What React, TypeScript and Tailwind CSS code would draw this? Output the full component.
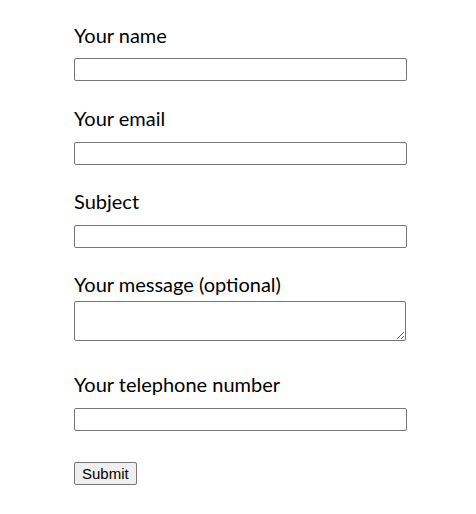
import React from 'react';

const inputCls = 'block h-[23px] w-[333px] rounded-[2px] border border-[#767676] bg-white';
const labelCls = 'text-[20px] leading-[28px]';

export default function App() {
  return (
    <div className="min-h-screen bg-white font-['Lato',sans-serif] text-black">
      <form className="flex flex-col items-start pl-[74px] pt-[21px]" onSubmit={(e) => e.preventDefault()}>
        <label className={labelCls}>Your name</label>
        <input type="text" className={`mt-[9px] ${inputCls}`} />

        <label className={`mt-[23px] ${labelCls}`}>Your email</label>
        <input type="email" className={`mt-[10px] ${inputCls}`} />

        <label className={`mt-[22px] ${labelCls}`}>Subject</label>
        <input type="text" className={`mt-[10px] ${inputCls}`} />

        <label className={`mt-[22px] ${labelCls}`}>Your message (optional)</label>
        <textarea className="mt-[3px] block h-[40px] w-[332px] resize-y rounded-[2px] border border-[#767676] bg-white" />

        <label className={`mt-[29px] ${labelCls}`}>Your telephone number</label>
        <input type="tel" className={`mt-[10px] ${inputCls}`} />

        <button
          type="submit"
          className="mt-[31px] h-[23px] rounded-[2px] border border-[#767676] bg-[#efefef] px-[7px] font-['Liberation_Sans',Arial,sans-serif] text-[15px] leading-[21px] text-black"
        >
          Submit
        </button>
      </form>
    </div>
  );
}
